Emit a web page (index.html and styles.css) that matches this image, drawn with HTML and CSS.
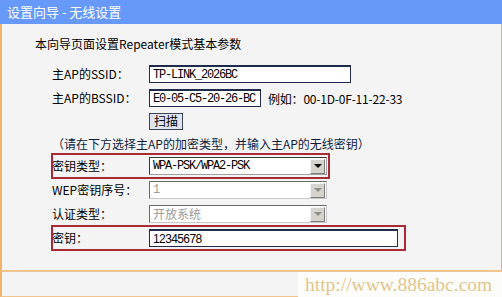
FILE: index.html
```html
<!DOCTYPE html>
<html lang="zh-CN">
    <head>
        <meta charset="utf-8" />
        <title>设置向导 - 无线设置</title>
        <link rel="stylesheet" href="styles.css">
    </head>
    <body>
        <div class="title">设置向导 - 无线设置</div>
        <div class="panel">
            <p class="intro">本向导页面设置Repeater模式基本参数</p>
            <div class="form">
                <div class="row">
                    <span class="lbl">主AP的SSID：</span>
                    <input class="txt ssid" type="text" value="TP-LINK_2026BC" />
                </div>
                <div class="row">
                    <span class="lbl">主AP的BSSID：</span>
                    <input class="txt bssid" type="text" value="E0-05-C5-20-26-BC" />
                    <span class="hint">例如：00-1D-0F-11-22-33</span>
                </div>
                <div class="row short">
                    <span class="lbl"></span>
                    <button class="btn" type="button">扫描</button>
                </div>
                <div class="row short note">（请在下方选择主AP的加密类型，并输入主AP的无线密钥）</div>
                <div class="row hl hl-type">
                    <span class="lbl">密钥类型：</span>
                    <div class="sel">
                        <span class="val mono">WPA-PSK/WPA2-PSK</span>
                        <span class="arrow"></span>
                    </div>
                </div>
                <div class="row">
                    <span class="lbl">WEP密钥序号：</span>
                    <div class="sel off">
                        <span class="val mono">1</span>
                        <span class="arrow"></span>
                    </div>
                </div>
                <div class="row">
                    <span class="lbl">认证类型：</span>
                    <div class="sel off">
                        <span class="val">开放系统</span>
                        <span class="arrow"></span>
                    </div>
                </div>
                <div class="row hl hl-key">
                    <span class="lbl">密钥：</span>
                    <input class="txt key" type="text" value="12345678" />
                </div>
            </div>
        </div>
        <div class="footer">
            <div class="mark">http://www.886abc.com</div>
        </div>
    </body>
</html>
```

FILE: styles.css
```css
body {
    margin: 0;
    background-color: #f4f4f4;
    color: #000;
    font: normal 12px "Noto Sans CJK SC", sans-serif;
}
.title {
    height: 24px;
    line-height: 24px;
    background-color: #6699f9;
    color: #fff;
    font-size: 13px;
    padding-left: 7px;
}
.panel {
    border-left: 2px solid #eeb46c;
    border-right: 1px solid #d4b888;
    border-bottom: 2px solid #f0c48c;
    padding: 10px 0 20px 33px;
}
.intro {
    margin: 0 0 8px 0;
    height: 20px;
    line-height: 20px;
}
.form {
    margin-left: 17px;
}
.row {
    display: flex;
    align-items: center;
    height: 24px;
}
.row.short {
    height: 22px;
}
.note {
    color: #101c3c;
}
.lbl {
    width: 97px;
    flex: none;
    line-height: 16px;
}
.hl {
    outline: 2px solid #a92a36;
    outline-offset: -1px;
}
.hl-type {
    width: 277px;
}
.hl-key {
    width: 353px;
}
.txt {
    box-sizing: border-box;
    height: 18px;
    margin: 0;
    padding: 0 0 0 3px;
    border: 1px solid #1e2b4a;
    border-top-width: 2px;
    background: #fff;
    color: #000;
    font: 12px "Liberation Mono", monospace;
    letter-spacing: -1.2px;
}
.ssid {
    width: 202px;
}
.bssid {
    width: 112px;
}
.key {
    width: 249px;
    font-family: "Liberation Sans", sans-serif;
    letter-spacing: -0.6px;
}
.hint {
    margin-left: 7px;
    letter-spacing: -0.2px;
}
.btn {
    box-sizing: border-box;
    width: 34px;
    height: 17px;
    margin: 0;
    padding: 0;
    border: 1px solid #3a4256;
    background: #dfe3ef;
    color: #000;
    font: 12px "Noto Sans CJK SC", sans-serif;
    line-height: 14px;
}
.sel {
    box-sizing: border-box;
    width: 178px;
    height: 18px;
    display: flex;
    align-items: center;
    background: #fff;
    border: 1px solid;
    border-color: #3a3a3a #a0a0a0 #a0a0a0 #3a3a3a;
}
.sel .val {
    flex: 1;
    padding-left: 3px;
    line-height: 16px;
}
.mono {
    font-family: "Liberation Mono", monospace;
    letter-spacing: -1.2px;
}
.arrow {
    box-sizing: border-box;
    width: 15px;
    height: 15px;
    margin-right: 1px;
    display: flex;
    align-items: center;
    justify-content: center;
    background: #d6d3cc;
    border: 1px solid;
    border-color: #f4f4f4 #7c7c7c #7c7c7c #f4f4f4;
}
.arrow::after {
    content: "";
    border-top: 4px solid #000;
    border-left: 4px solid transparent;
    border-right: 4px solid transparent;
}
.sel.off {
    border-color: #6a6a6a #c8c8c8 #c8c8c8 #6a6a6a;
    color: #9a9a9a;
}
.sel.off .arrow::after {
    border-top-color: #8e8e8e;
}
.footer {
    position: relative;
    height: 24px;
    border-left: 2px solid #eeb46c;
    border-bottom: 1px solid #f0c48c;
}
.mark {
    position: absolute;
    right: 0;
    top: 0;
    width: 204px;
    height: 25px;
    padding-left: 7px;
    box-sizing: border-box;
    background-color: #fcfcfa;
    color: #e2c68c;
    font: 19.5px "Liberation Serif", serif;
    line-height: 25px;
}
```
